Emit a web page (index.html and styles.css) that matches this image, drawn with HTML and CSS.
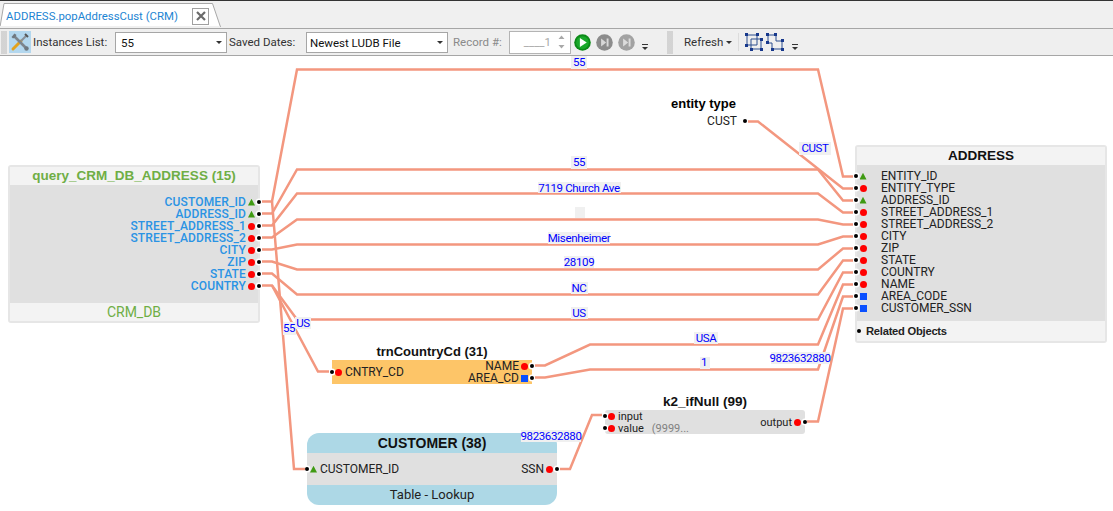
FILE: index.html
```html
<!DOCTYPE html>
<html lang="en">
<head>
    <meta charset="UTF-8">
    <title>ADDRESS.popAddressCust (CRM)</title>
    <link rel="stylesheet" href="styles.css">
</head>
<body>
    <div class="tabstrip">
        <div class="tab">
            <svg class="tab-shape" width="222" height="27" viewBox="0 0 222 27"><path d="M0 26 L4 2.5 H212.5 L220.5 26" fill="#fff" stroke="#a8a8a8"/><rect x="0" y="25" width="220" height="2" fill="#f0f0f0"/></svg>
            <span class="tab-title">ADDRESS.popAddressCust (CRM)</span>
            <span class="tab-close">
                <svg width="10" height="10" viewBox="0 0 10 10"><path d="M1 1 L9 9 M9 1 L1 9" stroke="#6a6a6a" stroke-width="2.2"/></svg>
            </span>
        </div>
    </div>

    <div class="toolbar">
        <span class="grip"></span>
        <span class="tool-btn">
            <svg width="20" height="20" viewBox="0 0 20 20">
                <path d="M3 17 L11 9" stroke="#e2a21c" stroke-width="3" stroke-linecap="round"/>
                <path d="M11 9 L16 4" stroke="#8a8f96" stroke-width="2"/>
                <path d="M15 2 L18 5" stroke="#555" stroke-width="2"/>
                <path d="M4 4 L16 16" stroke="#7d858d" stroke-width="2.6"/>
                <path d="M1.5 5 L4.5 1.5 L6.5 3 L5 5.5 L3 6.5 Z" fill="#6f7880"/>
                <circle cx="16.5" cy="16.5" r="2.2" fill="#6f7880"/>
            </svg>
        </span>
        <span class="tb-label lbl-instances">Instances List:</span>
        <span class="combo combo-instances">55<i class="caret"></i></span>
        <span class="tb-label lbl-dates">Saved Dates:</span>
        <span class="combo combo-dates">Newest LUDB File<i class="caret"></i></span>
        <span class="tb-label tb-off lbl-record">Record #:</span>
        <span class="spin">
            <span class="spin-val">____1</span>
            <svg width="9" height="18" viewBox="0 0 9 18"><path d="M1.5 6 L4.5 2.5 L7.5 6 Z M1.5 12 L4.5 15.5 L7.5 12 Z" fill="#a8a8a8"/></svg>
        </span>
        <svg class="nav-btn first" width="17" height="17" viewBox="0 0 16 16"><circle cx="8" cy="8" r="7.8" fill="#0c8a18"/><circle cx="8" cy="8" r="6" fill="#19a82a"/><path d="M5.5 3.8 L12 8 L5.5 12.2 Z" fill="#fff"/></svg>
        <svg class="nav-btn" width="17" height="17" viewBox="0 0 16 16"><circle cx="8" cy="8" r="7.8" fill="#8c8c8c"/><path d="M4.8 4.2 L9.6 8 L4.8 11.8 Z M10 4.2 H11.8 V11.8 H10 Z" fill="#d8d8d8"/></svg>
        <svg class="nav-btn" width="17" height="17" viewBox="0 0 16 16"><circle cx="8" cy="8" r="7.8" fill="#a2a2a2"/><path d="M4.8 4.2 L9.6 8 L4.8 11.8 Z M10 4.2 H11.8 V11.8 H10 Z" fill="#dcdcdc"/></svg>
        <span class="overflow of-first"></span>
        <span class="grip grip-mid"></span>
        <span class="tb-label lbl-refresh">Refresh<i class="caret"></i></span>
        <span class="tb-sep"></span>
        <svg class="layout-icon" width="18" height="18" viewBox="0 0 18 18">
            <path d="M2 2 H12 V12 H2 Z M6 6 H16 V16 H6 Z" fill="none" stroke="#2c4f8f"/>
            <path d="M0 0 h3 v3 h-3 Z M11 0 h3 v3 h-3 Z M0 11 h3 v3 h-3 Z M15 15 h3 v3 h-3 Z M15 5 h3 v3 h-3 Z M5 15 h3 v3 h-3 Z" fill="#17388c"/>
        </svg>
        <svg class="layout-icon second" width="18" height="18" viewBox="0 0 18 18">
            <path d="M2 2 H10 V8 H16 V16 H6 V10 H2 Z" fill="none" stroke="#2c4f8f"/>
            <path d="M0 0 h3 v3 h-3 Z M8 0 h3 v3 h-3 Z M15 6 h3 v3 h-3 Z M15 15 h3 v3 h-3 Z M5 15 h3 v3 h-3 Z M0 8 h3 v3 h-3 Z" fill="#17388c"/>
        </svg>
        <span class="overflow of-last"></span>
    </div>

    <div class="canvas">
        <!-- wires and their value labels, in page coordinates -->
        <svg class="wires" width="1113" height="455" viewBox="0 56 1113 455">
            <g class="wire">
                <polyline points="262,201.5 272,201.5 297,69.5 818,69.5 843,176.5 853,176.5"/>
                <polyline points="272,201.5 294,469 305,469"/>
                <polyline points="262,213.5 272,213.5 297,169.5 818,169.5 843,200.5 853,200.5"/>
                <polyline points="262,225.5 272,225.5 297,193.5 818,193.5 843,212.5 853,212.5"/>
                <polyline points="262,237.5 272,237.5 297,219.5 818,219.5 843,224.5 853,224.5"/>
                <polyline points="262,249.5 272,249.5 297,244.5 818,244.5 843,236.5 853,236.5"/>
                <polyline points="262,261.5 272,261.5 297,269.5 818,269.5 843,248.5 853,248.5"/>
                <polyline points="262,273.5 272,273.5 297,294.5 818,294.5 843,260.5 853,260.5"/>
                <polyline points="262,285.5 272,285.5 297,319.5 818,319.5 843,272.5 853,272.5"/>
                <polyline points="272,285.5 318,371.5 329,371.5"/>
                <polyline points="748,121.5 758,121.5 843,188.5 853,188.5"/>
                <polyline points="535,365.5 545,365.5 590,344.5 818,344.5 843,284.5 853,284.5"/>
                <polyline points="535,377.5 545,377.5 590,369.5 818,369.5 843,296.5 853,296.5"/>
                <polyline points="807,421.5 818,421.5 843,308.5 853,308.5"/>
                <polyline points="560,469 570,469 592,415 602,415"/>
            </g>
            <g class="val">
                <rect x="571" y="56" width="16" height="13"/><text x="579" y="66">55</text>
                <rect x="799" y="142" width="32" height="13"/><text x="815" y="152">CUST</text>
                <rect x="571" y="156" width="16" height="13"/><text x="579" y="166">55</text>
                <rect x="538" y="182" width="83" height="11"/><text x="579" y="192">7119 Church Ave</text>
                <rect x="575" y="207" width="10" height="11"/>
                <rect x="548" y="232" width="62" height="12"/><text x="579" y="242">Misenheimer</text>
                <rect x="564" y="256" width="30" height="12"/><text x="579" y="266">28109</text>
                <rect x="571" y="282" width="17" height="12"/><text x="579" y="292">NC</text>
                <rect x="571" y="307" width="17" height="12"/><text x="579" y="317">US</text>
                <rect x="694" y="332" width="24" height="12"/><text x="706" y="342">USA</text>
                <rect x="700" y="357" width="10" height="12"/><text x="704" y="366">1</text>
                <rect x="771" y="352" width="59" height="12"/><text x="800" y="362">9823632880</text>
                <rect x="295" y="317" width="16" height="12"/><text x="303" y="327">US</text>
                <rect x="283" y="322" width="13" height="13"/><text x="289" y="332">55</text>
                <rect x="521" y="430" width="60" height="12"/><text x="551" y="440">9823632880</text>
            </g>
        </svg>

        <div class="entity-const">
            <div class="const-title">entity type</div>
            <div class="row row-out"><span>CUST</span><i class="dot"></i></div>
        </div>

        <div class="node node-query">
            <div class="node-head head-green">query_CRM_DB_ADDRESS (15)</div>
            <div class="node-body body-query">
                <div class="row row-out"><span>CUSTOMER_ID</span><i class="mk tri"></i><i class="dot"></i></div>
                <div class="row row-out"><span>ADDRESS_ID</span><i class="mk tri"></i><i class="dot"></i></div>
                <div class="row row-out"><span>STREET_ADDRESS_1</span><i class="mk red"></i><i class="dot"></i></div>
                <div class="row row-out"><span>STREET_ADDRESS_2</span><i class="mk red"></i><i class="dot"></i></div>
                <div class="row row-out"><span>CITY</span><i class="mk red"></i><i class="dot"></i></div>
                <div class="row row-out"><span>ZIP</span><i class="mk red"></i><i class="dot"></i></div>
                <div class="row row-out"><span>STATE</span><i class="mk red"></i><i class="dot"></i></div>
                <div class="row row-out"><span>COUNTRY</span><i class="mk red"></i><i class="dot"></i></div>
            </div>
            <div class="node-foot foot-green">CRM_DB</div>
        </div>

        <div class="node node-address">
            <div class="node-head">ADDRESS</div>
            <div class="node-body body-address">
                <div class="row row-in"><i class="dot"></i><i class="mk tri"></i><span>ENTITY_ID</span></div>
                <div class="row row-in"><i class="dot"></i><i class="mk red"></i><span>ENTITY_TYPE</span></div>
                <div class="row row-in"><i class="dot"></i><i class="mk tri"></i><span>ADDRESS_ID</span></div>
                <div class="row row-in"><i class="dot"></i><i class="mk red"></i><span>STREET_ADDRESS_1</span></div>
                <div class="row row-in"><i class="dot"></i><i class="mk red"></i><span>STREET_ADDRESS_2</span></div>
                <div class="row row-in"><i class="dot"></i><i class="mk red"></i><span>CITY</span></div>
                <div class="row row-in"><i class="dot"></i><i class="mk red"></i><span>ZIP</span></div>
                <div class="row row-in"><i class="dot"></i><i class="mk red"></i><span>STATE</span></div>
                <div class="row row-in"><i class="dot"></i><i class="mk red"></i><span>COUNTRY</span></div>
                <div class="row row-in"><i class="dot"></i><i class="mk red"></i><span>NAME</span></div>
                <div class="row row-in"><i class="dot"></i><i class="mk blue"></i><span>AREA_CODE</span></div>
                <div class="row row-in"><i class="dot"></i><i class="mk blue"></i><span>CUSTOMER_SSN</span></div>
            </div>
            <div class="node-foot foot-related"><i class="dot"></i>Related Objects</div>
        </div>

        <div class="fn fn-country">
            <div class="fn-title title-small">trnCountryCd (31)</div>
            <div class="fn-box box-orange">
                <div class="side side-in">
                    <div class="row row-in"><i class="dot"></i><i class="mk red"></i><span>CNTRY_CD</span></div>
                </div>
                <div class="side side-out">
                    <div class="row row-out"><span>NAME</span><i class="mk red"></i><i class="dot"></i></div>
                    <div class="row row-out"><span>AREA_CD</span><i class="mk blue"></i><i class="dot"></i></div>
                </div>
            </div>
        </div>

        <div class="fn fn-null">
            <div class="fn-title">k2_ifNull (99)</div>
            <div class="fn-box box-grey">
                <div class="side side-in">
                    <div class="row row-in"><i class="dot"></i><i class="mk red"></i><span>input</span></div>
                    <div class="row row-in"><i class="dot"></i><i class="mk red"></i><span>value</span><em class="default">(9999...</em></div>
                </div>
                <div class="side side-out">
                    <div class="row row-out"><span>output</span><i class="mk red"></i><i class="dot"></i></div>
                </div>
            </div>
        </div>

        <div class="lookup">
            <div class="lookup-head">CUSTOMER (38)</div>
            <div class="lookup-body">
                <div class="row row-in"><i class="dot"></i><i class="mk tri"></i><span>CUSTOMER_ID</span></div>
                <div class="row row-out"><span>SSN</span><i class="mk red"></i><i class="dot"></i></div>
            </div>
            <div class="lookup-foot">Table - Lookup</div>
        </div>
    </div>
</body>
</html>
```

FILE: styles.css
```css
* {
    box-sizing: border-box;
}
body {
    margin: 0;
    height: 511px;
    overflow: hidden;
    background: #fff;
    font-family: Roboto, "Liberation Sans", sans-serif;
    font-size: 12px;
    color: #222;
}

/* tab strip */
.tabstrip {
    height: 28px;
    background: #f0f0f0;
    border-top: 1px solid #333;
}
.tab {
    position: relative;
    display: flex;
    align-items: center;
    width: 222px;
    height: 28px;
    padding: 2px 0 0 6px;
    z-index: 1;
}
.tab-shape {
    position: absolute;
    left: 0;
    top: 0;
}
.tab-title {
    position: relative;
    width: 186px;
    font-size: 11.4px;
    color: #1c84d2;
    white-space: nowrap;
}
.tab-close {
    position: relative;
    display: flex;
    align-items: center;
    justify-content: center;
    width: 17px;
    height: 17px;
    background: #fff;
    border: 1px solid #a0a0a0;
}

/* toolbar */
.toolbar {
    display: flex;
    align-items: center;
    height: 28px;
    font-size: 11.5px;
    background: #efefef;
    border-top: 1px solid #a6a6a6;
    border-bottom: 1px solid #a6a6a6;
}
.grip {
    width: 6px;
    height: 23px;
    margin-left: 1px;
    background: radial-gradient(circle, #b4b4b4 0.6px, transparent 0.8px) 0 0 / 2px 2px;
}
.tool-btn {
    display: flex;
    align-items: center;
    justify-content: center;
    width: 22px;
    height: 22px;
    margin-left: 2px;
    background: #b3d7ee;
}
.tb-label {
    white-space: nowrap;
    color: #333;
}
.tb-off {
    color: #8a8a8a;
}
.lbl-instances {
    width: 82px;
    margin-left: 2px;
}
.combo {
    position: relative;
    height: 21px;
    padding: 3px 0 0 3px;
    background: #fff;
    border: 1px solid #a6a6a6;
    color: #111;
    white-space: nowrap;
}
.combo-instances {
    width: 112px;
    padding-left: 5px;
}
.lbl-dates {
    width: 77px;
    margin-left: 2px;
}
.combo-dates {
    width: 142px;
}
.caret {
    display: inline-block;
    width: 0;
    height: 0;
    border: 3px solid transparent;
    border-top: 3px solid #333;
    border-bottom: 0;
}
.combo .caret {
    position: absolute;
    right: 4px;
    top: 8px;
}
.lbl-record {
    width: 56px;
    margin-left: 5px;
}
.spin {
    display: flex;
    align-items: center;
    justify-content: flex-end;
    width: 62px;
    height: 23px;
    padding-right: 4px;
    background: #fff;
    border: 1px solid #b4b4b4;
    color: #a8a8a8;
}
.spin-val {
    margin-right: 6px;
}
.nav-btn {
    margin-left: 5px;
}
.nav-btn.first {
    margin-left: 3px;
}
.overflow {
    width: 6px;
    height: 6px;
    margin-top: 10px;
    border-top: 1px solid #333;
    position: relative;
}
.overflow::after {
    content: "";
    position: absolute;
    left: 0;
    top: 2px;
    border: 3px solid transparent;
    border-top: 3px solid #333;
    border-bottom: 0;
}
.of-first {
    margin-left: 7px;
}
.grip-mid {
    margin-left: 19px;
}
.lbl-refresh {
    width: 50px;
    margin-left: 11px;
}
.lbl-refresh .caret {
    margin-left: 3px;
    vertical-align: 2px;
}
.tb-sep {
    width: 1px;
    height: 18px;
    margin-left: 4px;
    background: #dcdcdc;
}
.layout-icon {
    margin-left: 6px;
}
.layout-icon.second {
    margin-left: 3px;
}
.of-last {
    margin-left: 8px;
}

/* diagram */
.canvas {
    position: relative;
    height: 455px;
}
.wires {
    position: absolute;
    left: 0;
    top: 0;
    z-index: 1;
}
.wire polyline {
    fill: none;
    stroke: #f3977f;
    stroke-width: 2.5;
}
.val rect {
    fill: #f0f0f0;
}
.val text {
    fill: #0000ff;
    font-size: 11.5px;
    letter-spacing: -0.35px;
    text-anchor: middle;
}

.row {
    display: flex;
    align-items: center;
    height: 12px;
    white-space: nowrap;
}
.row-out {
    justify-content: flex-end;
}
.dot {
    flex: none;
    width: 4px;
    height: 4px;
    background: #000;
    border-radius: 50%;
    box-shadow: 0 0 0 1.5px #fff;
}
.row-out .dot {
    margin: 0 -2px 0 2px;
}
.row-in .dot {
    margin: 0 1px 0 -2px;
}
.mk {
    flex: none;
    width: 7px;
    height: 7px;
}
.row-out .mk {
    margin-left: 2px;
}
.row-in .mk {
    margin-right: 3px;
}
.mk.red {
    background: #f00;
    border-radius: 50%;
}
.mk.blue {
    background: #0a50ff;
}
.mk.tri {
    background: #3f9a12;
    clip-path: polygon(50% 5%, 100% 100%, 0 100%);
}

.node {
    position: absolute;
    background: #e0e0e0;
    border: 2px solid #e6e6e6;
    border-radius: 3px;
}
.node-head {
    height: 18px;
    background: #f3f3f3;
    font-family: "Liberation Sans", sans-serif;
    font-size: 13.5px;
    font-weight: bold;
    line-height: 17px;
    text-align: center;
    color: #111;
}
.head-green {
    color: #6fae45;
}
.node-foot {
    background: #f3f3f3;
}
.foot-green {
    height: 18px;
    font-size: 14px;
    line-height: 18px;
    text-align: center;
    color: #6fae45;
}
.node-query {
    left: 8px;
    top: 109px;
    width: 252px;
    height: 158px;
}
.body-query {
    height: 118px;
    padding-top: 11px;
    letter-spacing: 0.15px;
    color: #2a93e4;
    font-weight: 500;
}
.body-query .dot {
    margin-right: -3px;
}
.node-address {
    left: 855px;
    top: 89px;
    width: 252px;
    height: 198px;
}
.body-address {
    height: 156px;
    padding-top: 5px;
}
.body-address .dot {
    margin: 0 1.5px 0 -3px;
}
.body-address span {
    margin-left: 11.5px;
}
.foot-related {
    display: flex;
    align-items: center;
    height: 20px;
    font-family: "Liberation Sans", sans-serif;
    font-weight: bold;
    font-size: 11.2px;
    letter-spacing: -0.25px;
    color: #222;
}
.foot-related .dot {
    margin: 0 5px 0 0;
    box-shadow: none;
}

.entity-const {
    position: absolute;
    left: 651px;
    top: 40px;
    width: 94px;
}
.entity-const span {
    margin-right: 4px;
}
.const-title {
    font-family: "Liberation Sans", sans-serif;
    font-size: 13px;
    font-weight: bold;
    color: #000;
    text-align: right;
    padding-right: 9px;
    line-height: 16px;
    margin-bottom: 3px;
}

.fn {
    position: absolute;
    width: 200px;
}
.fn-title {
    height: 16px;
    font-family: "Liberation Sans", sans-serif;
    font-size: 13.5px;
    font-weight: bold;
    line-height: 16px;
    text-align: center;
    color: #111;
}
.title-small {
    font-size: 13px;
}
.fn-box {
    display: flex;
    justify-content: space-between;
    height: 24px;
}
.side {
    display: flex;
    flex-direction: column;
    justify-content: center;
}
.box-orange {
    background: #fdc568;
}
.box-grey {
    background: #e0e0e0;
    border-radius: 3px;
    font-size: 11px;
}
.fn-country {
    left: 332px;
    top: 288px;
}
.fn-null {
    left: 605px;
    top: 338px;
}
.default {
    margin-left: 8px;
    font-style: normal;
    color: #808080;
}

.lookup {
    position: absolute;
    left: 307px;
    top: 377px;
    width: 250px;
    height: 72px;
    background: #add8e6;
    border-radius: 12px;
}
.lookup-head {
    height: 20px;
    font-family: "Liberation Sans", sans-serif;
    font-size: 14px;
    font-weight: bold;
    line-height: 20px;
    text-align: center;
    color: #111;
}
.lookup-body {
    display: flex;
    justify-content: space-between;
    align-items: center;
    height: 32px;
    background: #e0e0e0;
}
.lookup-foot {
    height: 20px;
    font-size: 13px;
    line-height: 20px;
    text-align: center;
}
```
